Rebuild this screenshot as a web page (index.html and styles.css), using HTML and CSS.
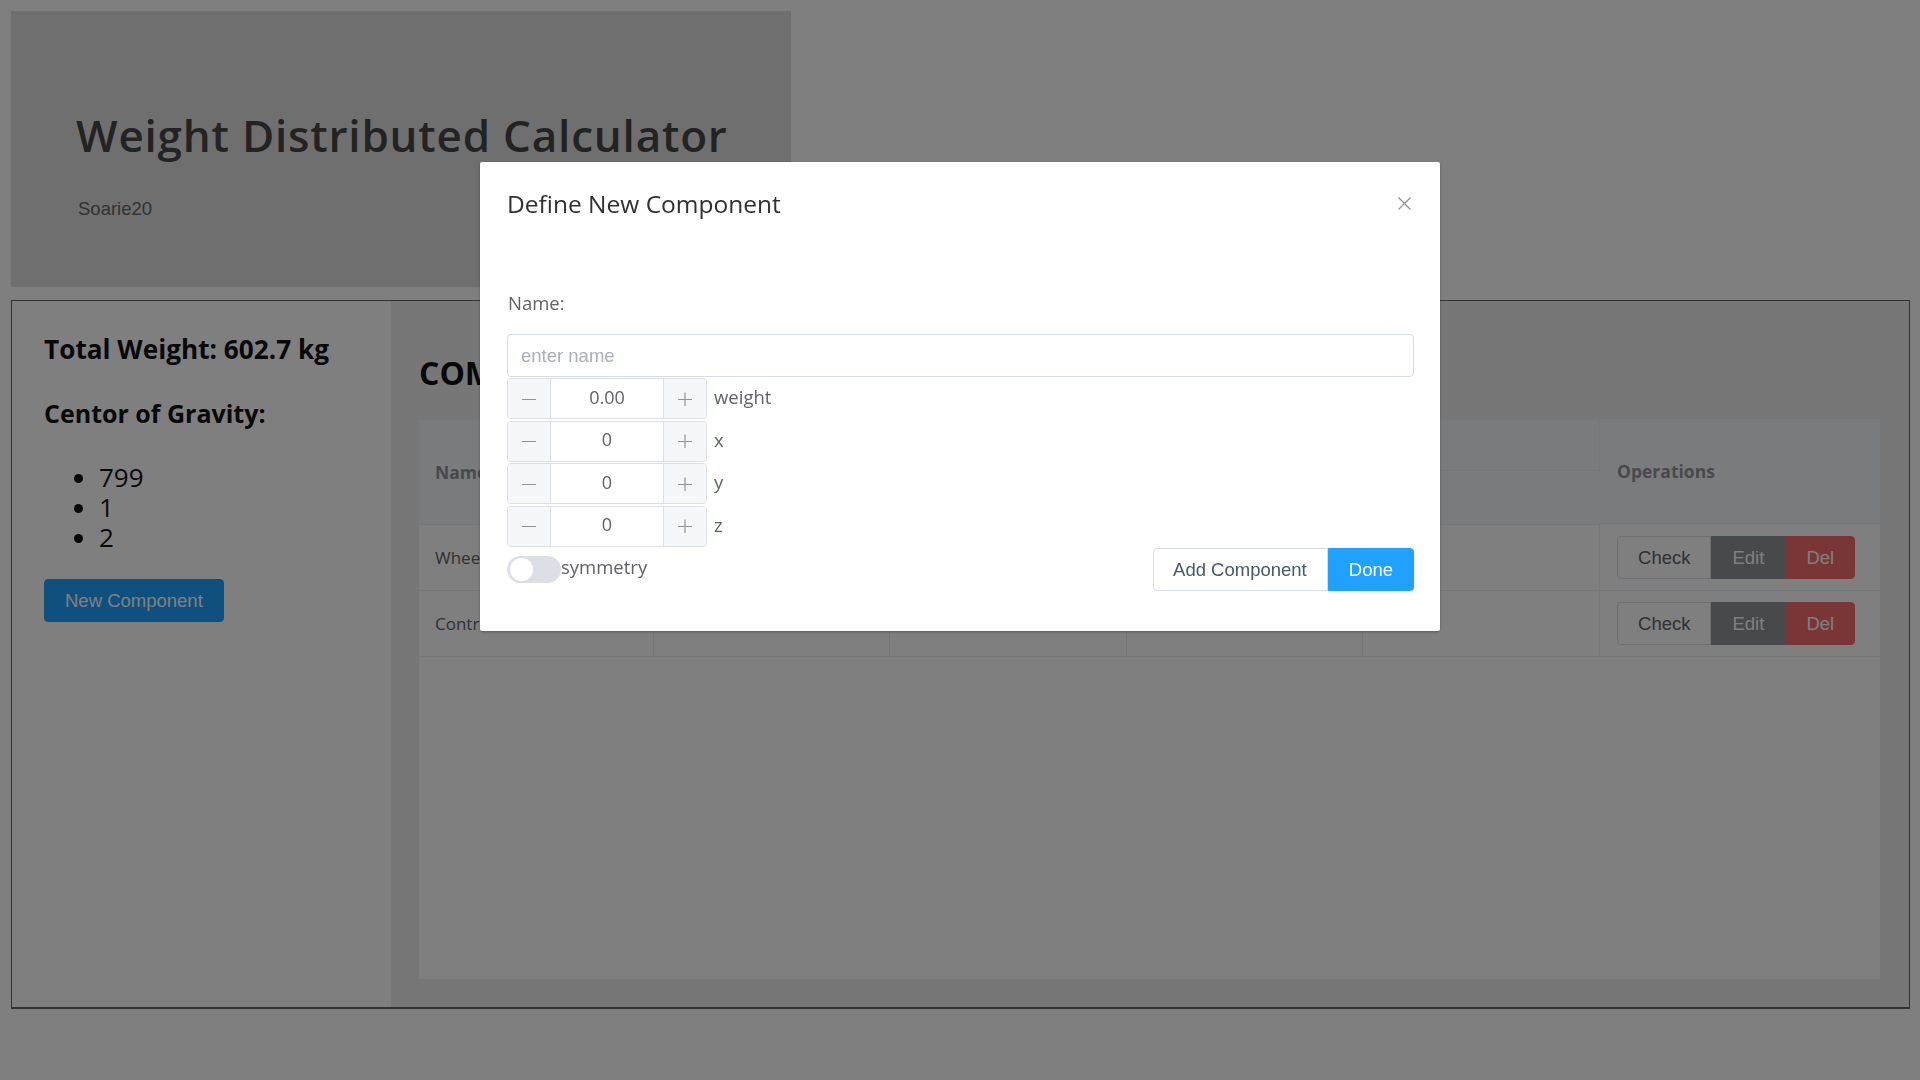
FILE: index.html
```html
<!DOCTYPE html>
<html lang="en">
<head>
<meta charset="utf-8">
<title>Weight Distributed Calculator</title>
<link rel="stylesheet" href="styles.css">
</head>
<body>
<div class="page">
  <header class="hero">
    <h1 class="hero-title">Weight Distributed Calculator</h1>
    <p class="hero-author">Soarie20</p>
  </header>
  <section class="workspace">
    <aside class="sidebar">
      <h3 class="stat stat-first">Total Weight: 602.7 kg</h3>
      <h3 class="stat stat-second">Centor of Gravity:</h3>
      <ul class="cog">
        <li>799</li>
        <li>1</li>
        <li>2</li>
      </ul>
      <button class="btn btn-primary btn-new">New Component</button>
    </aside>
    <main class="main">
      <h2 class="main-title">COMPONENTS</h2>
      <div class="table-wrap">
        <table class="grid">
          <colgroup>
            <col class="c-name"><col class="c-a"><col class="c-b"><col class="c-a"><col class="c-b"><col class="c-ops">
          </colgroup>
          <thead>
            <tr class="hr-top">
              <th rowspan="2">Name</th>
              <th rowspan="2">Weight</th>
              <th colspan="3">Position</th>
              <th rowspan="2" class="th-ops">Operations</th>
            </tr>
            <tr class="hr-sub">
              <th>x</th><th>y</th><th>z</th>
            </tr>
          </thead>
          <tbody>
            <tr class="row">
              <td>Wheel</td><td>20.0</td><td>0</td><td>0</td><td>0</td>
              <td class="td-ops">
                <div class="btn-group">
                  <button class="btn btn-plain">Check</button><button class="btn btn-info">Edit</button><button class="btn btn-danger">Del</button>
                </div>
              </td>
            </tr>
            <tr class="row">
              <td>Controller</td><td>582.7</td><td>799</td><td>1</td><td>2</td>
              <td class="td-ops">
                <div class="btn-group">
                  <button class="btn btn-plain">Check</button><button class="btn btn-info">Edit</button><button class="btn btn-danger">Del</button>
                </div>
              </td>
            </tr>
          </tbody>
        </table>
      </div>
    </main>
  </section>
</div>

<div class="overlay"></div>

<div class="dialog">
  <div class="dialog-header">
    <span class="dialog-title">Define New Component</span>
    <button class="dialog-close" aria-label="Close">
      <svg width="13" height="13" viewBox="0 0 13 13"><path d="M0.5 0.5 L12.5 12.5 M12.5 0.5 L0.5 12.5" stroke="#909399" stroke-width="1.3" fill="none"/></svg>
    </button>
  </div>
  <div class="dialog-body">
    <label class="field-label">Name:</label>
    <input class="text-input" type="text" placeholder="enter name">
    <div class="num-row">
      <div class="stepper">
        <span class="step-btn step-minus"><svg width="14" height="14" viewBox="0 0 14 14"><path d="M0 7.5 H14" stroke="#8c939d" stroke-width="1.2"/></svg></span>
        <span class="step-value">0.00</span>
        <span class="step-btn step-plus"><svg width="14" height="14" viewBox="0 0 14 14"><path d="M0 7.5 H14 M7 0.5 V14" stroke="#8c939d" stroke-width="1.2"/></svg></span>
      </div>
      <span class="num-label">weight</span>
    </div>
    <div class="num-row">
      <div class="stepper">
        <span class="step-btn step-minus"><svg width="14" height="14" viewBox="0 0 14 14"><path d="M0 7.5 H14" stroke="#8c939d" stroke-width="1.2"/></svg></span>
        <span class="step-value">0</span>
        <span class="step-btn step-plus"><svg width="14" height="14" viewBox="0 0 14 14"><path d="M0 7.5 H14 M7 0.5 V14" stroke="#8c939d" stroke-width="1.2"/></svg></span>
      </div>
      <span class="num-label">x</span>
    </div>
    <div class="num-row">
      <div class="stepper">
        <span class="step-btn step-minus"><svg width="14" height="14" viewBox="0 0 14 14"><path d="M0 7.5 H14" stroke="#8c939d" stroke-width="1.2"/></svg></span>
        <span class="step-value">0</span>
        <span class="step-btn step-plus"><svg width="14" height="14" viewBox="0 0 14 14"><path d="M0 7.5 H14 M7 0.5 V14" stroke="#8c939d" stroke-width="1.2"/></svg></span>
      </div>
      <span class="num-label">y</span>
    </div>
    <div class="num-row">
      <div class="stepper">
        <span class="step-btn step-minus"><svg width="14" height="14" viewBox="0 0 14 14"><path d="M0 7.5 H14" stroke="#8c939d" stroke-width="1.2"/></svg></span>
        <span class="step-value">0</span>
        <span class="step-btn step-plus"><svg width="14" height="14" viewBox="0 0 14 14"><path d="M0 7.5 H14 M7 0.5 V14" stroke="#8c939d" stroke-width="1.2"/></svg></span>
      </div>
      <span class="num-label">z</span>
    </div>
    <div class="last-row">
      <div class="switch-wrap">
        <span class="switch"><span class="switch-knob"></span></span>
        <span class="switch-label">symmetry</span>
      </div>
      <div class="btn-group">
        <button class="btn btn-plain btn-dlg">Add Component</button><button class="btn btn-primary btn-dlg">Done</button>
      </div>
    </div>
  </div>
</div>
</body>
</html>
```
FILE: styles.css
```css
* { box-sizing: border-box; }

html, body {
  margin: 0;
  padding: 0;
  background: #ffffff;
  font-family: "Open Sans", "Noto Sans", sans-serif;
}

.page {
  padding: 11px 10px 0 11px;
}

/* ---------- hero ---------- */
.hero {
  width: 780px;
  height: 276px;
  background: #dedede;
  padding: 94px 0 0 65px;
}
.hero-title {
  margin: 0;
  font-size: 44px;
  font-weight: 600;
  line-height: 60px;
  color: #474747;
  letter-spacing: 0.8px;
}
.hero-author {
  margin: 33px 0 0 2px;
  font-family: "Liberation Sans", Arial, sans-serif;
  font-size: 18.5px;
  line-height: 21px;
  color: #666;
}

/* ---------- workspace ---------- */
.workspace {
  margin-top: 13px;
  height: 709px;
  border: 1px solid #666;
  border-bottom-width: 2px;
  display: flex;
}

.sidebar {
  width: 379px;
  flex: none;
  background: #fff;
  padding: 30px 0 0 32px;
}
.stat {
  margin: 0;
  font-size: 25.5px;
  font-weight: 700;
  line-height: 35px;
  color: #111;
}
.stat-first { font-size: 26.2px; position: relative; top: 1px; }
.stat-second { margin-top: 30px; font-size: 25px; }

.cog {
  margin: 31px 0 0 0;
  padding-left: 55px;
  font-size: 26px;
  line-height: 30px;
  color: #111;
}

.btn-new {
  margin-top: 27px;
  border-radius: 4px;
  padding: 0 21px;
}

.main {
  flex: 1;
  background: #eeeeee;
  padding: 50px 29px 28px 28px;
  display: flex;
  flex-direction: column;
}
.main-title {
  margin: 0 0 25px 0;
  font-size: 32px;
  font-weight: 700;
  line-height: 44px;
  color: #111;
}
.table-wrap {
  flex: 1;
  background: #ffffff;
}

.grid {
  width: 1461px;
  table-layout: fixed;
  border-collapse: separate;
  border-spacing: 0;
}
.c-name { width: 235px; }
.c-a { width: 236px; }
.c-b { width: 237px; }
.c-ops { width: 280px; }

.grid th, .grid td {
  border-right: 1px solid #ebeef5;
  border-bottom: 1px solid #ebeef5;
  padding: 0 16px;
  text-align: left;
  white-space: nowrap;
  overflow: hidden;
}
.grid th:last-child, .grid td:last-child { border-right: none; }
.grid th {
  background: #f5f7fa;
  font-size: 17.5px;
  font-weight: 700;
  color: #909399;
}
.grid .hr-top { height: 51px; }
.grid .hr-sub { height: 54px; }
.grid .th-ops { padding-left: 17px; border-right: none; position: relative; top: -1px; }
.grid .td-ops { padding-left: 17px; border-right: none; }
.grid td {
  font-size: 17px;
  color: #606266;
}
.grid .row { height: 66px; }

/* ---------- buttons ---------- */
.btn {
  height: 43px;
  padding: 0 20px;
  border: 1px solid #dcdfe6;
  background: #fff;
  font-family: "Liberation Sans", Arial, sans-serif;
  font-size: 18.5px;
  color: #606266;
  cursor: pointer;
  vertical-align: top;
}
.btn-primary {
  background: #20a0ff;
  border-color: #20a0ff;
  color: #fff;
}
.btn-info {
  background: #909399;
  border-color: #909399;
  color: #fff;
}
.btn-danger {
  background: #f56c6c;
  border-color: #f56c6c;
  color: #fff;
}
.btn-group {
  display: inline-flex;
}
.btn-group .btn { border-radius: 0; }
.btn-group .btn:first-child { border-radius: 4px 0 0 4px; }
.btn-group .btn:last-child { border-radius: 0 4px 4px 0; }
.btn-dlg.btn-plain { color: #48576a; border-color: #d8dce5; padding: 0 20px 0 19px; }
.btn-dlg.btn-primary { border-color: #20a0ff; }

/* ---------- overlay + dialog ---------- */
.overlay {
  position: fixed;
  inset: 0;
  background: rgba(0, 0, 0, 0.5);
  z-index: 10;
}
.dialog {
  position: fixed;
  top: 162px;
  left: 480px;
  width: 960px;
  background: #fff;
  z-index: 11;
  box-shadow: 0 1px 3px rgba(0, 0, 0, 0.3);
  border-radius: 2px;
}
.dialog-header {
  position: relative;
  padding: 25px 28px 0 27px;
}
.dialog-title {
  display: block;
  font-size: 24.5px;
  line-height: 33px;
  color: #303133;
}
.dialog-close {
  position: absolute;
  top: 35px;
  right: 29px;
  width: 13px;
  height: 13px;
  padding: 0;
  border: none;
  background: none;
  display: flex;
}
.dialog-body {
  padding: 70px 26px 40px 27px;
}
.field-label {
  display: block;
  font-size: 18.5px;
  line-height: 25px;
  color: #606266;
  margin-bottom: 19px;
  margin-left: 1px;
}
.text-input {
  display: block;
  width: 100%;
  height: 43px;
  border: 1px solid #d8dce5;
  border-radius: 4px;
  padding: 0 13px;
  font-family: "Liberation Sans", Arial, sans-serif;
  font-size: 18.5px;
  color: #606266;
  outline: none;
}
.text-input::placeholder { color: #a9aeb8; }

.num-row {
  display: flex;
  align-items: center;
  margin-top: 1.5px;
}
.num-row:first-of-type { margin-top: 1px; }
.stepper {
  width: 200px;
  height: 41px;
  border: 1px solid #dcdfe6;
  border-radius: 4px;
  display: flex;
  overflow: hidden;
}
.step-btn {
  width: 43px;
  flex: none;
  background: #f5f7fa;
  display: flex;
  align-items: center;
  justify-content: center;
}
.step-minus { border-right: 1px solid #dcdfe6; }
.step-plus { border-left: 1px solid #dcdfe6; }
.step-value {
  flex: 1;
  display: flex;
  align-items: center;
  justify-content: center;
  font-size: 18px;
  color: #606266;
  position: relative;
  top: -2px;
}
.num-label {
  margin-left: 7px;
  font-size: 18.5px;
  color: #606266;
  line-height: 25px;
  position: relative;
  top: -2px;
}

.last-row {
  margin-top: 1.5px;
  display: flex;
  align-items: center;
  justify-content: space-between;
}
.switch-wrap {
  display: flex;
  align-items: center;
}
.switch {
  position: relative;
  width: 54px;
  height: 27px;
  border-radius: 14px;
  background: #dcdfe6;
  flex: none;
}
.switch-knob {
  position: absolute;
  top: 2px;
  left: 3px;
  width: 23px;
  height: 23px;
  border-radius: 50%;
  background: #fff;
}
.switch-label {
  margin-left: 0;
  font-size: 18.5px;
  line-height: 25px;
  color: #606266;
  position: relative;
  top: -3px;
}
```
